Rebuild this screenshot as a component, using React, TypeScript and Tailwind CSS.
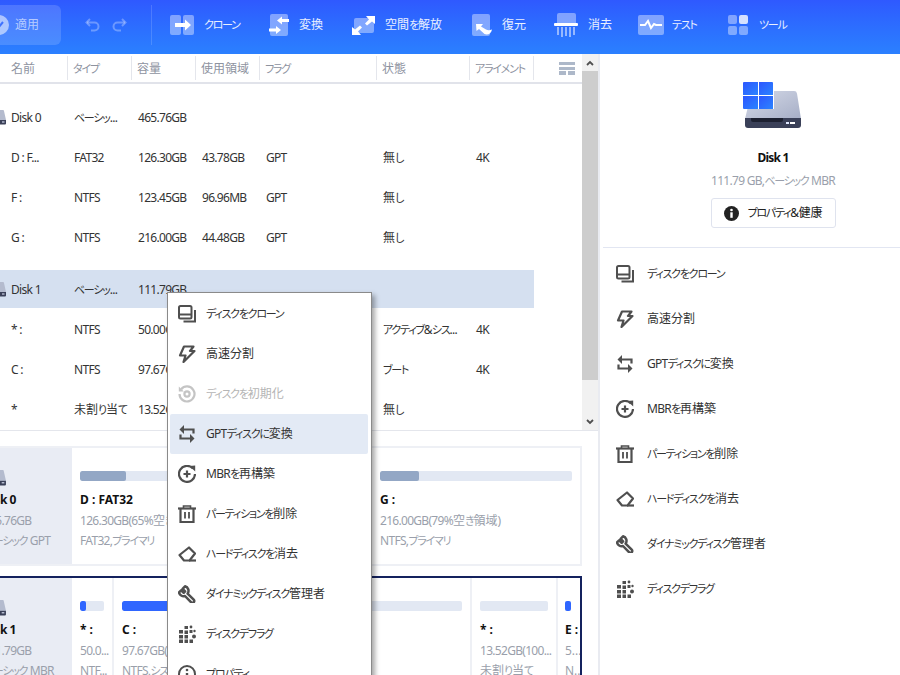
import type { ReactNode } from "react";

// kana and latin run narrower than kanji in the reference font
function T({ text }: { text: string }) {
  const parts = text.match(/[\u3040-\u30ff]+|[\u4e00-\u9fff]+|[^\u3040-\u30ff\u4e00-\u9fff]+/g) ?? [];
  return (
    <>
      {parts.map((p, i) => {
        const kana = /[\u3040-\u30ff]/.test(p);
        const kanji = /[\u4e00-\u9fff]/.test(p);
        return (
          <span key={i} className={kana ? "text-[11px] tracking-[-1.25px]" : kanji ? "" : "tracking-[-0.7px]"}>
            {p}
          </span>
        );
      })}
    </>
  );
}

function BigDisk() {
  return (
    <svg width="60" height="47" viewBox="0 0 60 47" className="block">
      <defs>
        <linearGradient id="bigBody" x1="0" y1="0" x2="1" y2="1">
          <stop offset="0" stopColor="#d5dae8" />
          <stop offset="1" stopColor="#a6aec6" />
        </linearGradient>
        <linearGradient id="win" x1="0" y1="0" x2="1" y2="1">
          <stop offset="0" stopColor="#2d56ff" />
          <stop offset="1" stopColor="#2b84ff" />
        </linearGradient>
      </defs>
      <path d="M12 9h39a3 3 0 0 1 3 2.400L58 37H2L8 12a4 4 0 0 1 4-3z" fill="url(#bigBody)" />
      <path d="M2 36h56v7a3 3 0 0 1-3 3H5a3 3 0 0 1-3-3z" fill="#3a4058" />
      <path d="M8 36h32v2a2 2 0 0 1-2 2H10a2 2 0 0 1-2-2z" fill="#1c2030" />
      <rect x="43" y="40" width="3" height="2" fill="#dfe8ff" />
      <rect x="47" y="40" width="5" height="2" fill="#ffffff" />
      <path d="M0 0h31v27H0z" fill="#fff" />
      <path d="M1 0h14v13H0V1a1 1 0 0 1 1-1z" fill="url(#win)" />
      <path d="M16 0h13a1 1 0 0 1 1 1v12H16z" fill="url(#win)" />
      <path d="M0 14h15v13H1a1 1 0 0 1-1-1z" fill="url(#win)" />
      <path d="M16 14h14v13H16z" fill="url(#win)" />
    </svg>
  );
}

function SmallDisk({ className }: { className: string }) {
  return (
    <svg viewBox="0 0 16 16" className={className}>
      <path d="M4 1h8a1 1 0 0 1 1 1l2 9H1l2-9a1 1 0 0 1 1-1z" fill="#b4bbce" />
      <path d="M1 11h14v3.500a1 1 0 0 1-1 1H2a1 1 0 0 1-1-1z" fill="#3a4058" />
      <rect x="11" y="12.500" width="2.500" height="1" fill="#e6ecff" />
    </svg>
  );
}

const stroke = { fill: "none", stroke: "currentColor", strokeWidth: 2 };

function ActionIcon({ name }: { name: string }) {
  if (name === "clone")
    return (
      <svg width="18" height="18" viewBox="0 0 18 18" {...stroke}>
        <rect x="1" y="1" width="12.500" height="12.500" rx="1.500" />
        <path d="M1 9.500h12.500" />
        <path d="M17 5v11.500H5.500" />
      </svg>
    );
  if (name === "zap")
    return (
      <svg width="18" height="18" viewBox="0 0 18 18" {...stroke} strokeWidth="2.200" strokeLinejoin="round">
        <path d="M6 1.500h9.500L12 6h4.500L5.500 17l2-6.500H2z" />
      </svg>
    );
  if (name === "init")
    return (
      <svg width="18" height="18" viewBox="0 0 18 18" {...stroke} strokeWidth="2.200">
        <path d="M3.200 4.200A7.500 7.500 0 1 1 1.500 9" />
        <path d="M.8 1.500 5.800 6.500H.8z" fill="currentColor" stroke="none" />
        <circle cx="9" cy="9" r="2.600" />
      </svg>
    );
  if (name === "convert")
    return (
      <svg width="18" height="18" viewBox="0 0 18 18" {...stroke} strokeWidth="2.200">
        <path d="M5 4.500H15.500V8.500" />
        <path d="M6 0v9L1.500 4.500z" fill="currentColor" stroke="none" />
        <path d="M13 13.500H2.500V9.500" />
        <path d="M12 9v9l4.500-4.500z" fill="currentColor" stroke="none" />
      </svg>
    );
  if (name === "rebuild")
    return (
      <svg width="18" height="18" viewBox="0 0 18 18" {...stroke} strokeWidth="2.200">
        <path d="M15 3.600A8 8 0 1 0 17 9" />
        <path d="M11.500 1 17.200.6v5.800z" fill="currentColor" stroke="none" />
        <path d="M9 5.500v7M5.500 9h7" />
      </svg>
    );
  if (name === "trash")
    return (
      <svg width="18" height="18" viewBox="0 0 18 18" {...stroke} strokeWidth="2.200">
        <path d="M0 3.500h18" />
        <path d="M5.500 3V1h7v2" strokeWidth="1.600" />
        <path d="M2.500 3.500V17h13V3.500" />
        <path d="M7 7v6.500M11 7v6.500" strokeWidth="1.800" />
      </svg>
    );
  if (name === "eraser")
    return (
      <svg width="18" height="18" viewBox="0 0 18 18" {...stroke} strokeWidth="2.200" strokeLinejoin="round">
        <path d="M1.500 10 11 2.500l6 6-5.500 7H6z" />
        <path d="M11 15.500H18" />
      </svg>
    );
  if (name === "wrench")
    return (
      <svg width="18" height="18" viewBox="0 0 18 18" {...stroke} strokeWidth="2.500" strokeLinejoin="round">
        <path d="M7 1.300 4.600 3.800l2.500 2.600-1.400 1.400-2.600-2.500L1 7.400a4.700 4.700 0 0 0 6 3.600l6 6.200a1.900 1.900 0 0 0 3.300-1.200 2 2 0 0 0-.6-1.400L9.600 8.600A4.700 4.700 0 0 0 7 1.300z" />
      </svg>
    );
  if (name === "defrag")
    return (
      <svg width="18" height="18" viewBox="0 0 18 18" fill="currentColor">
        <rect x="1" y="5" width="4" height="3.500" />
        <rect x="1" y="10" width="4" height="3.500" />
        <rect x="1" y="14.500" width="4" height="3.500" />
        <rect x="6.500" y="1" width="3.500" height="3" />
        <rect x="6.500" y="5.500" width="3.500" height="3.500" />
        <rect x="6.500" y="10" width="3.500" height="3.500" />
        <rect x="6.500" y="14.500" width="3.500" height="3.500" />
        <rect x="11.500" y="5" width="3" height="3" />
        <rect x="11.500" y="14.500" width="3.500" height="3.500" />
        <circle cx="13" cy="2" r="1.400" />
        <circle cx="16" cy="11.500" r="2" />
        <circle cx="16.500" cy="6" r="1.200" />
      </svg>
    );
  return (
    <svg width="18" height="18" viewBox="0 0 18 18" {...stroke}>
      <circle cx="9" cy="9" r="8" />
      <path d="M9 8v5" strokeWidth="2.400" />
      <circle cx="9" cy="5" r="1.300" fill="currentColor" stroke="none" />
    </svg>
  );
}

const actions = [
  { icon: "clone", label: "ディスクをクローン" },
  { icon: "zap", label: "高速分割" },
  { icon: "convert", label: "GPTディスクに変換" },
  { icon: "rebuild", label: "MBRを再構築" },
  { icon: "trash", label: "パーティションを削除" },
  { icon: "eraser", label: "ハードディスクを消去" },
  { icon: "wrench", label: "ダイナミックディスク管理者" },
  { icon: "defrag", label: "ディスクデフラグ" },
];

const menuItems = [
  { icon: "clone", label: "ディスクをクローン" },
  { icon: "zap", label: "高速分割" },
  { icon: "init", label: "ディスクを初期化", disabled: true },
  { icon: "convert", label: "GPTディスクに変換", active: true },
  { icon: "rebuild", label: "MBRを再構築" },
  { icon: "trash", label: "パーティションを削除" },
  { icon: "eraser", label: "ハードディスクを消去" },
  { icon: "wrench", label: "ダイナミックディスク管理者" },
  { icon: "defrag", label: "ディスクデフラグ" },
  { icon: "info", label: "プロパティ" },
];

function ToolItem({ width, box, label, children }: { width: string; box: string; label: string; children: ReactNode }) {
  return (
    <div className={`flex items-center shrink-0 ${width}`}>
      <div className={`shrink-0 ${box}`}>{children}</div>
      <span className="text-[12px] text-white/90 whitespace-nowrap">
        <T text={label} />
      </span>
    </div>
  );
}

function Toolbar() {
  const panel = "#ffffff";
  return (
    <div className="h-[54px] pb-[4px] flex items-center bg-gradient-to-b from-[#2f59ff] to-[#2b80ff] overflow-hidden">
      <div className="-ml-[20px] w-[81px] h-[40px] shrink-0 rounded-md bg-white/15 flex items-center pl-[9px] gap-[6px]">
        <svg width="20" height="20" viewBox="0 0 20 20">
          <circle cx="10" cy="10" r="10" fill="#ffffff" fillOpacity="0.55" />
          <path d="M6 10l3 3 5-6" stroke="#3f72ff" strokeWidth="2" fill="none" />
        </svg>
        <span className="text-[12px] text-white/60">適用</span>
      </div>
      <div className="ml-[24px] flex gap-[12px] text-white/30 shrink-0">
        <svg width="15" height="14" viewBox="0 0 15 14" fill="none" stroke="currentColor" strokeWidth="2">
          <path d="M5 1 1.500 4.500 5 8" />
          <path d="M2 4.500h7.500a4 4 0 0 1 0 8H6" />
        </svg>
        <svg width="15" height="14" viewBox="0 0 15 14" fill="none" stroke="currentColor" strokeWidth="2">
          <path d="M10 1l3.500 3.500L10 8" />
          <path d="M13 4.500H5.500a4 4 0 0 0 0 8H9" />
        </svg>
      </div>
      <div className="ml-[24px] w-px h-[40px] bg-white/15 shrink-0" />
      <div className="ml-[18px] flex items-center">
        <ToolItem width="w-[99px]" box="w-[34px]" label="クローン">
          <svg width="24" height="20" viewBox="0 0 24 20" className="block">
            <rect x="0" y="0" width="11" height="20" rx="2" fill={panel} fillOpacity="0.4" />
            <rect x="13" y="0" width="11" height="20" rx="2" fill={panel} fillOpacity="0.4" />
            <path d="M5 8h10V4.500l6 5.500-6 5.500V12H5z" fill={panel} />
          </svg>
        </ToolItem>
        <ToolItem width="w-[83px]" box="w-[30px]" label="変換">
          <svg width="20" height="22" viewBox="0 0 20 22" className="block">
            <rect x="1" y="0" width="18" height="22" rx="2" fill={panel} fillOpacity="0.4" />
            <path d="M13 2.500V5h7v3h-7v2.500L8 6.500z" fill={panel} />
            <path d="M7 12v2.500H0v3h7V20l5-4z" fill={panel} />
          </svg>
        </ToolItem>
        <ToolItem width="w-[120px]" box="w-[33px]" label="空間を解放">
          <svg width="23" height="19" viewBox="0 0 23 19" className="block">
            <rect x="2" y="2" width="20" height="15" rx="2" fill={panel} fillOpacity="0.4" />
            <path d="M14 0h9v8l-3-2.500-5 4-2-2 4-4z" fill={panel} />
            <path d="M0 19v-8l3 2.500 5-4 2 2-4 4 3 3.500z" fill={panel} />
          </svg>
        </ToolItem>
        <ToolItem width="w-[82px]" box="w-[30px]" label="復元">
          <svg width="21" height="22" viewBox="0 0 21 22" className="block">
            <rect x="0" y="0" width="18" height="22" rx="2" fill={panel} fillOpacity="0.4" />
            <path d="M4 10h7L9 12.500l5 3c2 1 3 1 6 0-.5 4-4.500 6-7.500 4.500L7 15l-2.500 2z" fill={panel} />
          </svg>
        </ToolItem>
        <ToolItem width="w-[84px]" box="w-[34px]" label="消去">
          <svg width="24" height="24" viewBox="0 0 24 24" className="block">
            <path d="M3 2a2 2 0 0 1 2-2h15a2 2 0 0 1 2 2v9H3z" fill={panel} fillOpacity="0.4" />
            <rect x="0" y="10" width="24" height="3" rx="1" fill={panel} />
            <path d="M3 14h2v8H3zM7 14h2v10H7zM11 14h2v9h-2zM15 14h2v10h-2zM19 14h2v8h-2z" fill={panel} fillOpacity="0.5" />
          </svg>
        </ToolItem>
        <ToolItem width="w-[90px]" box="w-[34px]" label="テスト">
          <svg width="26" height="20" viewBox="0 0 26 20" className="block">
            <rect x="0" y="0" width="26" height="20" rx="2" fill={panel} fillOpacity="0.4" />
            <path d="M2 10h5l3-4 3 7 3-4 2 1h6" fill="none" stroke={panel} strokeWidth="2" />
          </svg>
        </ToolItem>
        <ToolItem width="w-[90px]" box="w-[31px]" label="ツール">
          <svg width="20" height="20" viewBox="0 0 20 20" className="block">
            <rect x="0" y="0" width="9" height="9" rx="2" fill={panel} fillOpacity="0.4" />
            <rect x="11" y="0" width="9" height="9" rx="2" fill={panel} fillOpacity="0.8" />
            <rect x="0" y="11" width="9" height="9" rx="2" fill={panel} fillOpacity="0.4" />
            <rect x="11" y="11" width="9" height="9" rx="2" fill={panel} fillOpacity="0.4" />
          </svg>
        </ToolItem>
      </div>
    </div>
  );
}

const columns = "grid grid-cols-[68px_64px_64px_64px_117px_93px_64px]";

function Row({ cells, selected, disk }: { cells: string[]; selected?: boolean; disk?: boolean }) {
  return (
    <div className={`${columns} items-center w-[534px] ${selected ? "h-[38px] mb-[1px] bg-[#d5e0f0]" : "h-[40px]"} text-[12px] text-[#333333]`}>
      <div className="pl-[11px] flex items-center whitespace-nowrap">
        {disk && <SmallDisk className="-ml-[20px] mr-[4px] w-[16px] h-[16px] shrink-0" />}
        <span className="pt-[1px]">
          <T text={cells[0]} />
        </span>
      </div>
      {cells.slice(1).map((c, i) => (
        <div key={i} className="pl-[6px] pt-[1px] whitespace-nowrap">
          <T text={c} />
        </div>
      ))}
    </div>
  );
}

function DiskTable() {
  const heads = ["名前", "タイプ", "容量", "使用領域", "フラグ", "状態", "アライメント"];
  return (
    <div className="flex h-[377px] border-b border-[#e4e6ec]">
      <div className="w-[582px] overflow-hidden">
        <div className="h-[30px] border-b-2 border-[#e1e3ea] flex items-center relative">
          <div className={`${columns} w-[534px] h-[24px] items-center text-[12px] text-[#8e939f]`}>
            {heads.map((h, i) => (
              <div key={h} className={`h-full flex items-center border-r border-[#e4e6ec] whitespace-nowrap ${i === 0 ? "pl-[11px]" : "pl-[5px]"}`}>
                <span className="pt-[1px]">
                  <T text={h} />
                </span>
              </div>
            ))}
          </div>
          <svg width="16" height="13" viewBox="0 0 16 13" className="ml-[25px] text-[#adb8c9]" fill="currentColor">
            <rect width="16" height="3" />
            <rect y="5" width="16" height="3" />
            <rect y="9" width="7" height="4" />
            <rect x="9" y="9" width="7" height="4" />
          </svg>
        </div>
        <div className="pt-[13px]">
          <Row disk cells={["Disk 0", "ベーシッ...", "465.76GB"]} />
          <Row cells={["D : F...", "FAT32", "126.30GB", "43.78GB", "GPT", "無し", "4K"]} />
          <Row cells={["F :", "NTFS", "123.45GB", "96.96MB", "GPT", "無し"]} />
          <Row cells={["G :", "NTFS", "216.00GB", "44.48GB", "GPT", "無し"]} />
        </div>
        <div className="mt-[13px]">
          <Row selected disk cells={["Disk 1", "ベーシッ...", "111.79GB"]} />
          <Row cells={["* :", "NTFS", "50.00GB", "", "", "アクティブ&シス...", "4K"]} />
          <Row cells={["C :", "NTFS", "97.67GB", "", "", "ブート", "4K"]} />
          <Row cells={["*", "未割り当て", "13.52GB", "", "", "無し"]} />
        </div>
      </div>
      <div className="w-[16px] bg-[#f1f1f1] flex flex-col">
        <div className="h-[17px] flex items-center justify-center text-[#505050]">
          <svg width="8" height="6" viewBox="0 0 8 6" fill="none" stroke="currentColor" strokeWidth="1.800">
            <path d="M1 5l3-3 3 3" />
          </svg>
        </div>
        <div className="h-[309px] bg-[#cdcdcd]" />
        <div className="flex-1 flex items-end justify-center pb-[5px] text-[#505050]">
          <svg width="8" height="6" viewBox="0 0 8 6" fill="none" stroke="currentColor" strokeWidth="1.800">
            <path d="M1 1l3 3 3-3" />
          </svg>
        </div>
      </div>
    </div>
  );
}

function DiskSide({ name, size, kind }: { name: string; size: string; kind: string }) {
  return (
    <div className="w-[72px] shrink-0 bg-[#e9ecf4] overflow-hidden pt-[21px] whitespace-nowrap">
      <SmallDisk className="-ml-[10px] w-[17px] h-[17px]" />
      <div className="-ml-[17px] mt-[6px] text-[12px] leading-[16px] font-bold tracking-[-0.5px] text-[#111111]">{name}</div>
      <div className="-ml-[17px] mt-[5px] text-[12px] leading-[16px] text-[#9a9fab]">
        <T text={size} />
      </div>
      <div className="-ml-[17px] mt-[4px] text-[12px] leading-[16px] text-[#9a9fab]">
        <T text={kind} />
      </div>
    </div>
  );
}

function Partition({ width, barClass, used, title, size, kind, divided }: {
  width: string;
  barClass: string;
  used: string;
  title: string;
  size: string;
  kind: string;
  divided?: boolean;
}) {
  return (
    <div className={`${width} shrink-0 px-[8px] pt-[23px] overflow-hidden whitespace-nowrap ${divided ? "border-r-2 border-[#eef0f5]" : ""}`}>
      <div className="h-[10px] rounded-[2px] bg-[#e2e8f3] overflow-hidden">
        <div className={`h-full rounded-[2px] ${barClass} ${used}`} />
      </div>
      <div className="mt-[11px] text-[12px] leading-[16px] font-bold text-[#111111]">{title}</div>
      <div className="mt-[5px] text-[12px] leading-[16px] text-[#9a9fab]">
        <T text={size} />
      </div>
      <div className="mt-[4px] text-[12px] leading-[16px] text-[#9a9fab]">
        <T text={kind} />
      </div>
    </div>
  );
}

function DiskCards() {
  return (
    <div className="pt-[15px] pr-[16px]">
      <div className="flex h-[120px] border-y-2 border-r-2 border-[#eef0f5]">
        <DiskSide name="Disk 0" size="465.76GB" kind="ベーシック GPT" />
        <Partition width="w-[150px]" barClass="bg-[#93a7c5]" used="w-[46px]" title="D : FAT32" size="126.30GB(65%空き領域)" kind="FAT32,プライマリ" />
        <Partition width="w-[150px]" barClass="bg-[#93a7c5]" used="w-[20px]" title="F :" size="123.45GB" kind="NTFS,プライマリ" />
        <Partition width="w-[208px]" barClass="bg-[#93a7c5]" used="w-[39px]" title="G :" size="216.00GB(79%空き領域)" kind="NTFS,プライマリ" />
      </div>
      <div className="flex h-[120px] mt-[10px] border-y-2 border-r-2 border-[#14225e]">
        <DiskSide name="Disk 1" size="111.79GB" kind="ベーシック MBR" />
        <Partition divided width="w-[42px]" barClass="bg-[#2f66ff]" used="w-[6px]" title="* :" size="50.0..." kind="NTF..." />
        <Partition divided width="w-[358px]" barClass="bg-[#2f66ff]" used="w-[120px]" title="C :" size="97.67GB(" kind="NTFS,システム" />
        <Partition divided width="w-[86px]" barClass="bg-[#e2e8f3]" used="w-0" title="* :" size="13.52GB(100..." kind="未割り当て" />
        <div className="flex-1 min-w-0 pl-[7px] pt-[23px] overflow-hidden whitespace-nowrap">
          <div className="h-[10px] w-[6px] rounded-[2px] bg-[#2f66ff]" />
          <div className="mt-[11px] text-[12px] leading-[16px] font-bold text-[#111111]">E :</div>
          <div className="mt-[5px] text-[12px] leading-[16px] text-[#9a9fab]">5...</div>
          <div className="mt-[4px] text-[12px] leading-[16px] text-[#9a9fab]">N...</div>
        </div>
      </div>
    </div>
  );
}

function SidePanel() {
  return (
    <div className="flex-1 min-w-0 border-l-2 border-[#e9ebf1] overflow-hidden">
      <div className="w-[346px] pt-[28px] flex flex-col items-center">
        <BigDisk />
        <div className="mt-[21px] text-[12px] leading-[16px] font-bold tracking-[-0.8px] text-[#111111]">Disk 1</div>
        <div className="mt-[7px] text-[12px] leading-[16px] text-[#9a9fab]">
          <T text="111.79 GB,ベーシック MBR" />
        </div>
        <button type="button" className="mt-[9px] w-[125px] h-[30px] rounded-[3px] border border-[#dfe3ee] bg-white flex items-center justify-center gap-[9px] text-[12px] text-[#222222]">
          <svg width="15" height="15" viewBox="0 0 15 15">
            <circle cx="7.500" cy="7.500" r="7.500" fill="#222222" />
            <rect x="6.300" y="6.300" width="2.400" height="5.500" fill="#ffffff" />
            <circle cx="7.500" cy="4" r="1.300" fill="#ffffff" />
          </svg>
          <span>
            <T text="プロパティ&健康" />
          </span>
        </button>
      </div>
      <div className="mt-[19px] ml-[3px] h-px bg-[#e2e6f2]" />
      <div className="mt-[3px]">
        {actions.map((a) => (
          <div key={a.label} className="h-[45px] pl-[16px] flex items-center gap-[13px] text-[12px] text-[#333333]">
            <span className="text-[#4f4f4f] shrink-0 flex">
              <ActionIcon name={a.icon} />
            </span>
            <span>
              <T text={a.label} />
            </span>
          </div>
        ))}
      </div>
    </div>
  );
}

function ContextMenu() {
  return (
    <div className="absolute left-[167px] top-[292px] w-[205px] h-[420px] pt-[1px] bg-white border border-[#8a8a8a] shadow-[3px_3px_5px_rgba(0,0,0,0.35)]">
      {menuItems.map((m) => (
        <div
          key={m.label}
          className={`h-[40px] mx-[2px] w-[198px] pl-[8px] flex items-center gap-[10px] text-[12px] rounded-[2px] ${m.active ? "bg-[#e3eaf5]" : ""} ${m.disabled ? "text-[#b5b5b5]" : "text-[#333333]"}`}
        >
          <span className={`shrink-0 flex ${m.disabled ? "text-[#c4c4c4]" : "text-[#4f4f4f]"}`}>
            <ActionIcon name={m.icon} />
          </span>
          <span>
            <T text={m.label} />
          </span>
        </div>
      ))}
    </div>
  );
}

export default function App() {
  return (
    <div className="relative w-[900px] h-[675px] overflow-hidden bg-white font-['Noto_Sans','Noto_Sans_CJK_JP',sans-serif] [font-feature-settings:'palt']">
      <Toolbar />
      <div className="flex h-[621px]">
        <div className="w-[598px] shrink-0 overflow-hidden">
          <DiskTable />
          <DiskCards />
        </div>
        <SidePanel />
      </div>
      <ContextMenu />
    </div>
  );
}
